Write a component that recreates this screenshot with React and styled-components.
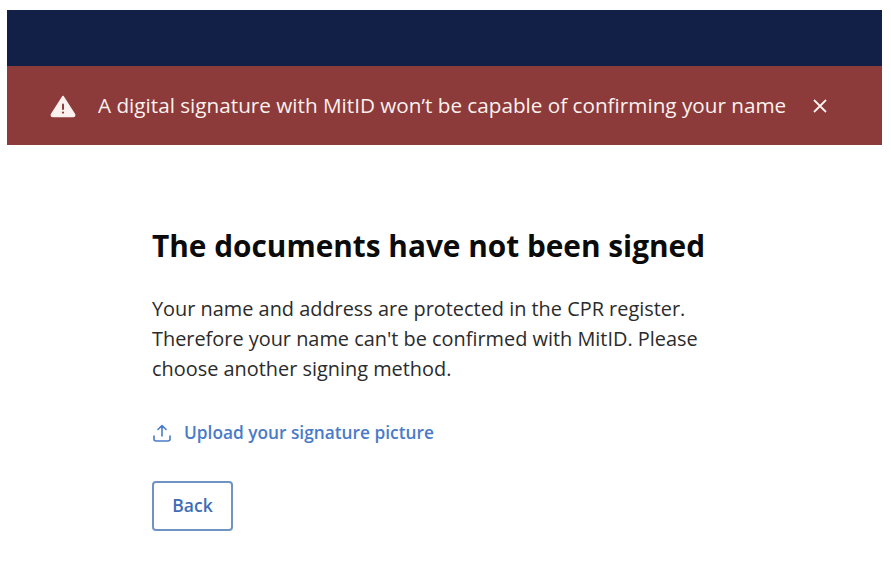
import React from 'react'
import styled, { createGlobalStyle } from 'styled-components'

const GlobalStyle = createGlobalStyle`
body {
  margin: 0;
  background: #fff;
  font-family: "Open Sans", "Liberation Sans", sans-serif;
}
`

const Page = styled.div`
width: 891px;
height: 573px;
padding: 10px 9px 0 7px;
box-sizing: border-box;
overflow: hidden;
`

const TopBar = styled.div`
height: 56px;
background: #121f46;
`

const Alert = styled.div`
height: 79px;
background: #8d3a3a;
color: #fbf1ee;
display: flex;
align-items: center;
padding-left: 43px;
font-size: 20.7px;
white-space: nowrap;
`

const AlertText = styled.span`
margin-left: 22px;
padding-bottom: 1px;
`

const Close = styled.span`
display: flex;
margin-left: 27px;
`

const Content = styled.main`
padding: 82px 0 0 145px;
display: flex;
flex-flow: column;
align-items: flex-start;
`

const Title = styled.h1`
margin: 0;
font-size: 29.8px;
line-height: 37px;
font-weight: 700;
color: #0b0b0b;
`

const Body = styled.p`
margin: 30px 0 0;
width: 560px;
font-size: 19.9px;
line-height: 30px;
color: #2b2b2b;
`

const UploadLink = styled.a`
margin-top: 37px;
display: flex;
align-items: center;
gap: 12px;
font-size: 17.3px;
line-height: 24px;
font-weight: 600;
color: #4a7bc8;
`

const BackButton = styled.button`
margin-top: 36px;
padding: 0 0 2px;
width: 81px;
height: 50px;
background: #fff;
border: 2px solid #6f94c3;
border-radius: 4px;
font-family: inherit;
font-size: 17.5px;
font-weight: 600;
color: #3f6db5;
`

const WarningIcon = () => (
  <svg width="26" height="24" viewBox="0 0 26 24">
    <path d="M13 2.5 L24.5 20.5 Q25 22.5 23 22.5 L3 22.5 Q1 22.5 1.5 20.5 Z" fill="#fbf1ee" stroke="#fbf1ee" strokeWidth="1.6" strokeLinejoin="round" />
    <rect x="12" y="9.5" width="2" height="6.5" rx="1" fill="#8d3a3a" />
    <circle cx="13" cy="18.6" r="1.1" fill="#8d3a3a" />
  </svg>
)

const CloseIcon = () => (
  <svg width="14" height="14" viewBox="0 0 14 14">
    <path d="M1 1 L13 13 M13 1 L1 13" stroke="#fbf1ee" strokeWidth="1.8" fill="none" />
  </svg>
)

const UploadIcon = () => (
  <svg width="20" height="20" viewBox="0 0 20 20" fill="none" stroke="#4a7bc8" strokeWidth="1.6" strokeLinecap="round" strokeLinejoin="round">
    <path d="M10 13 V3 M6 6.5 L10 2.5 L14 6.5" />
    <path d="M2 13 V16 Q2 18 4 18 H16 Q18 18 18 16 V13" />
  </svg>
)

const App = () => (
  <Page>
    <GlobalStyle />
    <TopBar />
    <Alert>
      <WarningIcon />
      <AlertText>A digital signature with MitID won’t be capable of confirming your name</AlertText>
      <Close><CloseIcon /></Close>
    </Alert>
    <Content>
      <Title>The documents have not been signed</Title>
      <Body>
        Your name and address are protected in the CPR register. Therefore your name can't be confirmed with MitID. Please choose another signing method.
      </Body>
      <UploadLink><UploadIcon />Upload your signature picture</UploadLink>
      <BackButton>Back</BackButton>
    </Content>
  </Page>
)

export default App
